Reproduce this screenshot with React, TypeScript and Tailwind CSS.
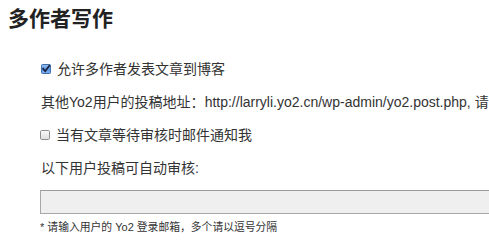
import React from "react";

const CJK = /([\u3000-\u303f\u4e00-\u9fff\uff00-\uffef]+)/;

function T({ s, cjk, lat }: { s: string; cjk: string; lat: string }) {
  const parts = s.split(CJK).filter((p) => p.length > 0);
  return (
    <>
      {parts.map((p, i) =>
        CJK.test(p) ? (
          <span key={i} className={cjk}>
            {p}
          </span>
        ) : (
          <span key={i} className={lat}>
            {p}
          </span>
        )
      )}
    </>
  );
}

function Checked() {
  return (
    <svg width="10" height="10" viewBox="0 0 10 10" className="shrink-0">
      <defs>
        <linearGradient id="cb1" x1="0" y1="0" x2="0" y2="1">
          <stop offset="0" stopColor="#9cc2f2" />
          <stop offset="0.5" stopColor="#5a97e4" />
          <stop offset="1" stopColor="#7ab0f0" />
        </linearGradient>
      </defs>
      <rect x="0.5" y="0.5" width="9" height="9" rx="1" fill="url(#cb1)" stroke="#3f6ea8" />
      <path d="M2.2 4.8 L4.2 7.2 L8.4 1.6" fill="none" stroke="#1b1f3a" strokeWidth="1.7" strokeLinecap="square" />
    </svg>
  );
}

function Unchecked() {
  return (
    <svg width="10" height="10" viewBox="0 0 10 10" className="shrink-0">
      <defs>
        <linearGradient id="cb2" x1="0" y1="0" x2="0" y2="1">
          <stop offset="0" stopColor="#fafafa" />
          <stop offset="1" stopColor="#dedede" />
        </linearGradient>
      </defs>
      <rect x="0.5" y="0.5" width="9" height="9" rx="1.2" fill="url(#cb2)" stroke="#8e8e8e" />
    </svg>
  );
}

const cjk = "text-[14px] font-['Noto_Sans_CJK_SC',sans-serif]";
const lat = "text-[14px] font-['Liberation_Sans',Arial,sans-serif]";
const cjkS = "text-[10.8px] font-['Noto_Sans_CJK_SC',sans-serif]";
const latS = "text-[11px] font-['Liberation_Sans',Arial,sans-serif]";

export default function App() {
  return (
    <div className="w-[489px] h-[235px] overflow-hidden bg-white text-[#333] font-['Liberation_Sans','Noto_Sans_CJK_SC',sans-serif]">
      <div className="h-[34px] flex items-center pl-[8px]">
        <h2 className="text-[21px] leading-none font-bold text-[#222] font-['Noto_Sans_CJK_SC',sans-serif]">多作者写作</h2>
      </div>
      <div className="pl-[40px] pt-[18px]">
        <div className="h-[33px] flex items-center whitespace-nowrap">
          <span className="ml-[1px] mr-[6px] flex"><Checked /></span>
          <span className="leading-none"><T s="允许多作者发表文章到博客" cjk={cjk} lat={lat} /></span>
        </div>
        <div className="h-[33px] flex items-center whitespace-nowrap pl-[1px] overflow-hidden">
          <span className="leading-none">
            <T s="其他Yo2用户的投稿地址：http://larryli.yo2.cn/wp-admin/yo2.post.php, 请将此地址告知其他作者" cjk={cjk} lat={lat} />
          </span>
        </div>
        <div className="h-[33px] flex items-center whitespace-nowrap">
          <span className="mr-[6px] flex"><Unchecked /></span>
          <span className="leading-none"><T s="当有文章等待审核时邮件通知我" cjk={cjk} lat={lat} /></span>
        </div>
        <div className="h-[33px] flex items-center whitespace-nowrap pl-[1px]">
          <span className="leading-none"><T s="以下用户投稿可自动审核:" cjk={cjk} lat={lat} /></span>
        </div>
        <div className="mt-[6px] h-[24px] w-[520px] border border-[#a8a8a8] border-t-[#9a9a9a] bg-[#efefef]" />
        <div className="mt-[5px] h-[14px] flex items-center whitespace-nowrap">
          <span className="leading-none"><T s="* 请输入用户的 Yo2 登录邮箱，多个请以逗号分隔" cjk={cjkS} lat={latS} /></span>
        </div>
      </div>
    </div>
  );
}
